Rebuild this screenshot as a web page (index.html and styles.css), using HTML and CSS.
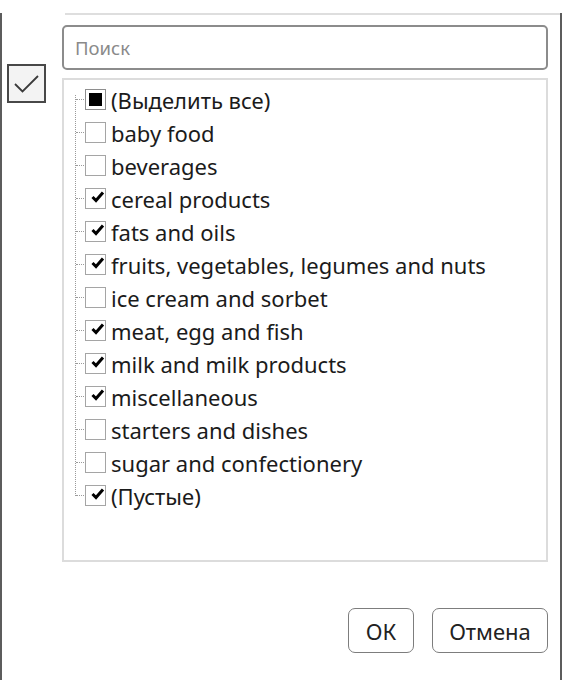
FILE: index.html
```html
<!DOCTYPE html>
<html lang="ru">
<head>
<meta charset="utf-8">
<link rel="stylesheet" href="styles.css">
</head>
<body>
<div class="window">
  <div class="topline"></div>
  <div class="content">
    <div class="side">
      <div class="bigcheck">
        <svg width="34" height="34" viewBox="0 0 34 34"><path d="M5 17 L12.5 24.5 L28 9" fill="none" stroke="#3a3a3a" stroke-width="1.8"/></svg>
      </div>
    </div>
    <div class="main">
      <div class="search">Поиск</div>
      <div class="list">
        <ul class="tree">
          <li><span class="cb ind"><span class="sq"></span></span><span class="lbl">(Выделить все)</span></li>
          <li><span class="cb"></span><span class="lbl">baby food</span></li>
          <li><span class="cb"></span><span class="lbl">beverages</span></li>
          <li><span class="cb on"><svg viewBox="0 0 14 12"><path d="M1.5 6 L5 9.5 L12 1.5" fill="none" stroke="#000" stroke-width="3"/></svg></span><span class="lbl">cereal products</span></li>
          <li><span class="cb on"><svg viewBox="0 0 14 12"><path d="M1.5 6 L5 9.5 L12 1.5" fill="none" stroke="#000" stroke-width="3"/></svg></span><span class="lbl">fats and oils</span></li>
          <li><span class="cb on"><svg viewBox="0 0 14 12"><path d="M1.5 6 L5 9.5 L12 1.5" fill="none" stroke="#000" stroke-width="3"/></svg></span><span class="lbl">fruits, vegetables, legumes and nuts</span></li>
          <li><span class="cb"></span><span class="lbl">ice cream and sorbet</span></li>
          <li><span class="cb on"><svg viewBox="0 0 14 12"><path d="M1.5 6 L5 9.5 L12 1.5" fill="none" stroke="#000" stroke-width="3"/></svg></span><span class="lbl">meat, egg and fish</span></li>
          <li><span class="cb on"><svg viewBox="0 0 14 12"><path d="M1.5 6 L5 9.5 L12 1.5" fill="none" stroke="#000" stroke-width="3"/></svg></span><span class="lbl">milk and milk products</span></li>
          <li><span class="cb on"><svg viewBox="0 0 14 12"><path d="M1.5 6 L5 9.5 L12 1.5" fill="none" stroke="#000" stroke-width="3"/></svg></span><span class="lbl">miscellaneous</span></li>
          <li><span class="cb"></span><span class="lbl">starters and dishes</span></li>
          <li><span class="cb"></span><span class="lbl">sugar and confectionery</span></li>
          <li><span class="cb on"><svg viewBox="0 0 14 12"><path d="M1.5 6 L5 9.5 L12 1.5" fill="none" stroke="#000" stroke-width="3"/></svg></span><span class="lbl">(Пустые)</span></li>
        </ul>
      </div>
      <div class="buttons">
        <div class="btn ok">ОК</div>
        <div class="btn cancel">Отмена</div>
      </div>
    </div>
  </div>
  <div class="grip"><i class="d1"></i><i class="d2"></i><i class="d3"></i></div>
</div>
</body>
</html>
```
FILE: styles.css
```css
html, body { margin: 0; padding: 0; background: #fff; }
body { font-family: "Noto Sans", "Open Sans", sans-serif; color: #1b1b1b; }
.window {
  position: relative;
  box-sizing: border-box;
  width: 562px;
  height: 680px;
  border-left: 2px solid #5c5c5c;
  border-right: 2px solid #5c5c5c;
  background: #fff;
}
.topline { margin: 13px 0 0 63px; height: 2px; background: #dedede; }
.content { display: flex; }
.side { width: 60px; flex: none; }
.bigcheck {
  box-sizing: border-box;
  width: 39px; height: 39px;
  margin: 49px 0 0 5px;
  border: 2px solid #484848;
  background: #f3f3f3;
  display: flex; align-items: center; justify-content: center;
}
.bigcheck svg { display: block; }
.main { width: 486px; flex: none; }
.search {
  box-sizing: border-box;
  margin-top: 10px;
  height: 45px;
  border: 2px solid #8c8c8c;
  border-radius: 5px;
  padding-left: 11px;
  display: flex; align-items: center;
  font-size: 18.5px;
  color: #8a8a8a;
}
.list {
  box-sizing: border-box;
  margin-top: 8px;
  height: 484px;
  border: 2px solid #dcdcdc;
  padding: 3px 0 0 11px;
}
.tree { list-style: none; margin: 0; padding: 0; position: relative; }
.tree::before {
  content: ""; position: absolute; left: 0; top: 12px; bottom: 16px;
  border-left: 1px dotted #9a9a9a;
}
.tree li { display: flex; align-items: center; height: 33px; position: relative; }
.tree li::before {
  content: ""; width: 10px; flex: none; border-top: 1px dotted #9a9a9a; margin-left: 1px;
}
.cb {
  box-sizing: border-box;
  width: 21px; height: 21px; flex: none;
  border: 1px solid #a5a5a5;
  background: #fff;
  position: relative;
  margin-left: -1px;
}
.cb.ind { border-color: #8e8e8e; padding: 3px; }
.cb .sq { display: block; width: 13px; height: 13px; background: #000; }
.cb svg { position: absolute; left: 5px; top: 2px; width: 14px; height: 12px; }
.lbl { margin-left: 5px; font-size: 22px; white-space: nowrap; line-height: 1; }
.buttons { display: flex; justify-content: flex-end; gap: 18px; margin-top: 46px; }
.btn {
  box-sizing: border-box; height: 45px;
  border: 1.5px solid #7d7d7d; border-radius: 7px;
  display: flex; align-items: center; justify-content: center;
  font-size: 22px; color: #222;
}
.ok { width: 66px; }
.cancel { width: 116px; }
.grip { position: absolute; right: 5px; bottom: 2px; width: 14px; height: 14px; }
.grip i { position: absolute; width: 3px; height: 3px; background: #9c9c9c; }
.grip .d1 { right: 0; top: 3px; }
.grip .d2 { right: 0; bottom: 0; }
.grip .d3 { right: 8px; bottom: 0; }
```
